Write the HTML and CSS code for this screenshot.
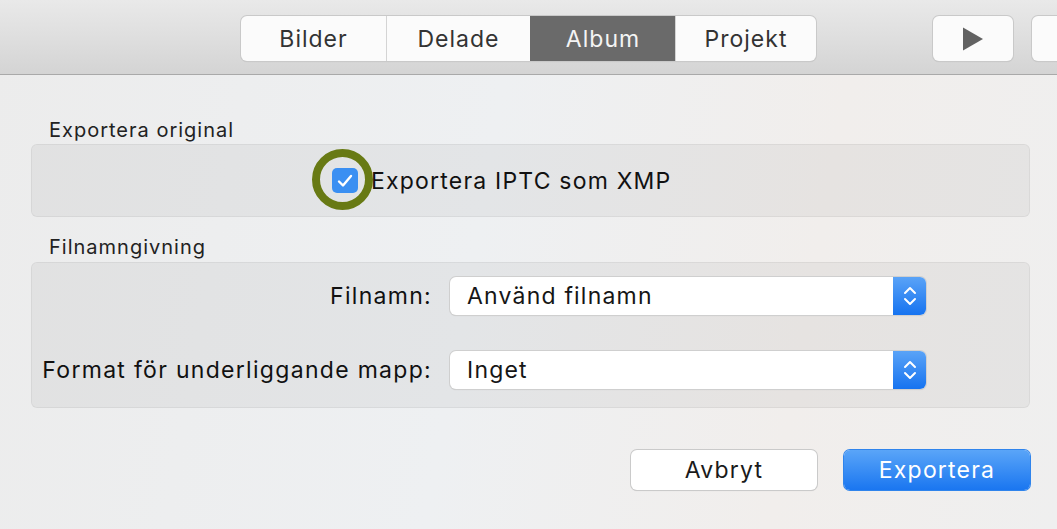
FILE: index.html
```html
<!DOCTYPE html>
<html lang="sv">
<head>
    <meta charset="UTF-8">
    <title>Exportera</title>
    <link rel="stylesheet" href="styles.css">
</head>
<body>
    <div class="toolbar">
        <div class="segmented">
            <div class="segment">Bilder</div>
            <div class="segment">Delade</div>
            <div class="segment active">Album</div>
            <div class="segment">Projekt</div>
        </div>
        <div class="tool-btn play">
            <svg width="22" height="24" viewBox="0 0 22 24"><path d="M1 0.5 L21 12 L1 23.5 Z" fill="#626262"/></svg>
        </div>
        <div class="tool-btn cut"></div>
    </div>

    <div class="sheet">
        <div class="group-title first">Exportera original</div>
        <div class="group group-check">
            <label class="check-row">
                <span class="checkbox">
                    <svg width="16" height="14" viewBox="0 0 16 14"><path d="M2 7.5 L6 11.5 L14 2" fill="none" stroke="#fff" stroke-width="2.4" stroke-linecap="round" stroke-linejoin="round"/></svg>
                    <span class="ring"></span>
                </span>
                <span class="check-text">Exportera IPTC som XMP</span>
            </label>
        </div>

        <div class="group-title">Filnamngivning</div>
        <div class="group group-form">
            <div class="form-row">
                <div class="form-label">Filnamn:</div>
                <div class="popup">
                    <span class="popup-value">Använd filnamn</span>
                    <span class="stepper">
                        <svg width="14" height="24" viewBox="0 0 14 24"><path d="M2 9 L7 4 L12 9 M2 15 L7 20 L12 15" fill="none" stroke="#fff" stroke-width="2" stroke-linecap="round" stroke-linejoin="round"/></svg>
                    </span>
                </div>
            </div>
            <div class="form-row">
                <div class="form-label">Format för underliggande mapp:</div>
                <div class="popup">
                    <span class="popup-value">Inget</span>
                    <span class="stepper">
                        <svg width="14" height="24" viewBox="0 0 14 24"><path d="M2 9 L7 4 L12 9 M2 15 L7 20 L12 15" fill="none" stroke="#fff" stroke-width="2" stroke-linecap="round" stroke-linejoin="round"/></svg>
                    </span>
                </div>
            </div>
        </div>

        <div class="actions">
            <button class="btn">Avbryt</button>
            <button class="btn primary">Exportera</button>
        </div>
    </div>
</body>
</html>
```

FILE: styles.css
```css
body {
    margin: 0;
    width: 1057px;
    height: 529px;
    overflow: hidden;
    font-family: Inter, "Liberation Sans", Arial, sans-serif;
    color: #1e1e1e;
    background: linear-gradient(100deg, #ececec 0%, #eef0f2 45%, #f1eeec 75%, #efefef 100%);
}
.toolbar {
    height: 75px;
    box-sizing: border-box;
    border-bottom: 1px solid #a9a9a9;
    background: linear-gradient(#e9e9e9, #d4d4d4);
    display: flex;
    align-items: flex-start;
    padding-top: 16px;
    padding-left: 241px;
}
.segmented {
    flex-shrink: 0;
    display: flex;
    height: 45px;
    border-radius: 6px;
    background: #fbfbfb;
    box-shadow: 0 0 0 1px #c9c9c9, 0 1px 1px rgba(0, 0, 0, 0.12);
    overflow: hidden;
}
.segment {
    box-sizing: border-box;
    width: 145px;
    display: flex;
    align-items: center;
    justify-content: center;
    font-size: 23px;
    letter-spacing: 1px;
    color: #333;
    border-left: 1px solid #d4d4d4;
}
.segment:first-child {
    border-left: none;
}
.segment:nth-child(2) {
    width: 144px;
}
.segment:last-child {
    width: 141px;
}
.segment.active {
    background: #6a6a6a;
    color: #f4f4f4;
    border-left-color: #6a6a6a;
}
.tool-btn {
    flex-shrink: 0;
    height: 45px;
    border-radius: 6px;
    background: #fbfbfb;
    box-shadow: 0 0 0 1px #c9c9c9, 0 1px 1px rgba(0, 0, 0, 0.12);
    display: flex;
    align-items: center;
    justify-content: center;
}
.play {
    width: 80px;
    margin-left: 117px;
}
.cut {
    width: 60px;
    margin-left: 19px;
}
.sheet {
    padding: 0 27px 0 31px;
}
.group-title {
    font-size: 20px;
    letter-spacing: 1px;
    color: #222;
    padding-left: 18px;
    height: 24px;
    line-height: 24px;
    margin-bottom: 3px;
}
.group-title.first {
    margin-top: 43px;
    margin-bottom: 2px;
}
.group {
    border-radius: 6px;
    background: rgba(0, 0, 0, 0.045);
    border: 1px solid rgba(0, 0, 0, 0.05);
}
.group-check {
    height: 71px;
    display: flex;
    align-items: center;
    padding-left: 300px;
    margin-bottom: 18px;
}
.check-row {
    display: flex;
    align-items: center;
    gap: 13px;
}
.checkbox {
    position: relative;
    width: 26px;
    height: 25px;
    border-radius: 5px;
    background: #3a8ff2;
    display: flex;
    align-items: center;
    justify-content: center;
}
/* highlight ring drawn over the checkbox */
.ring {
    position: absolute;
    left: -20px;
    top: -19px;
    width: 45px;
    height: 45px;
    border-radius: 50%;
    border: 8px solid #687a14;
}
.check-text {
    font-size: 23px;
    letter-spacing: 1.2px;
    color: #111;
}
.group-form {
    height: 146px;
    box-sizing: border-box;
    padding-top: 14px;
    display: flex;
    flex-direction: column;
    gap: 36px;
}
.form-row {
    display: flex;
    align-items: center;
    height: 38px;
}
.form-label {
    width: 400px;
    text-align: right;
    font-size: 23px;
    letter-spacing: 1.3px;
    color: #111;
}
.popup {
    margin-left: 18px;
    width: 476px;
    height: 38px;
    border-radius: 6px;
    background: #fff;
    box-shadow: 0 0 0 1px #cfcfcf, 0 1px 1px rgba(0, 0, 0, 0.15);
    display: flex;
    align-items: center;
    overflow: hidden;
}
.popup-value {
    flex: 1;
    padding-left: 17px;
    font-size: 23px;
    letter-spacing: 1.2px;
    color: #161616;
}
.stepper {
    width: 33px;
    height: 100%;
    background: linear-gradient(#5aa3f7, #1673f0);
    display: flex;
    align-items: center;
    justify-content: center;
}
.actions {
    display: flex;
    justify-content: flex-end;
    gap: 27px;
    margin-top: 42px;
}
.btn {
    width: 186px;
    height: 40px;
    border-radius: 6px;
    border: none;
    font-family: inherit;
    font-size: 23px;
    letter-spacing: 1.2px;
    background: #fff;
    color: #1a1a1a;
    box-shadow: 0 0 0 1px #cacaca, 0 1px 1px rgba(0, 0, 0, 0.15);
}
.btn.primary {
    background: linear-gradient(#5aa5f8, #1a76f0);
    color: #fff;
    box-shadow: 0 0 0 1px #2f84ec;
}
```
